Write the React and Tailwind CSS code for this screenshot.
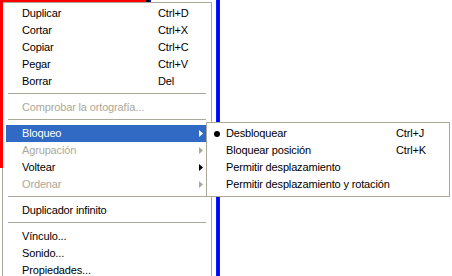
import React from "react";

const font = { fontFamily: '"Liberation Sans", Arial, sans-serif' };

function Arrow({ color }) {
  return (
    <svg width="4" height="7" viewBox="0 0 4 7" className="block">
      <polygon points="0,0 4,3.5 0,7" fill={color} />
    </svg>
  );
}

function Item({ label, shortcut, arrow, disabled, active }) {
  const text = active ? "text-white" : disabled ? "text-[#aca899]" : "text-black";
  const arrowColor = active ? "#ffffff" : disabled ? "#aca899" : "#000000";
  return (
    <div className={`flex h-[17px] items-center ${active ? "bg-[#316ac5]" : ""} ${text}`}>
      <span className="w-[152px] shrink-0 pl-[16px] whitespace-nowrap">{label}</span>
      <span className="whitespace-nowrap">{shortcut}</span>
      {arrow && (
        <span className="ml-auto mr-[5px]">
          <Arrow color={arrowColor} />
        </span>
      )}
    </div>
  );
}

function Sep() {
  return (
    <div className="h-[9px] px-[2px] pt-[3px]">
      <div className="h-px bg-[#aca899]" />
    </div>
  );
}

function SubItem({ label, shortcut, bullet }) {
  return (
    <div className="flex h-[17px] items-center text-black">
      <span className="flex w-[19px] shrink-0 items-center justify-center">
        {bullet && <span className="ml-[1px] block h-[6px] w-[6px] rounded-full bg-black" />}
      </span>
      <span className="w-[170px] shrink-0 whitespace-nowrap">{label}</span>
      <span className="whitespace-nowrap">{shortcut}</span>
    </div>
  );
}

export default function App() {
  return (
    <div
      className="relative h-[276px] w-[452px] overflow-hidden bg-white text-[11px] leading-none tracking-[-0.15px]"
      style={font}
    >
      {/* canvas shapes */}
      <div className="absolute left-0 top-0 h-[2px] w-[146px] bg-[#ff0000]" />
      <div className="absolute left-[146px] top-0 h-[2px] w-[3px] bg-black" />
      <div className="absolute left-[149px] top-0 h-[2px] w-[2px] bg-[#0000ff]" />
      <div className="absolute left-[216px] top-0 h-[276px] w-[4px] bg-[#0022ff]" />
      <div className="absolute left-[217px] top-0 h-[276px] w-[2px] bg-[#0000ee]" />

      {/* main context menu */}
      <div className="absolute left-[2px] top-[2px] w-[210px] border border-[#aca899] bg-white px-[3px] pt-[2px] pb-[2px]">
        <Item label="Duplicar" shortcut="Ctrl+D" />
        <Item label="Cortar" shortcut="Ctrl+X" />
        <Item label="Copiar" shortcut="Ctrl+C" />
        <Item label="Pegar" shortcut="Ctrl+V" />
        <Item label="Borrar" shortcut="Del" />
        <Sep />
        <Item label="Comprobar la ortografía..." disabled />
        <Sep />
        <Item label="Bloqueo" arrow active />
        <Item label="Agrupación" arrow disabled />
        <Item label="Voltear" arrow />
        <Item label="Ordenar" arrow disabled />
        <Sep />
        <Item label="Duplicador infinito" />
        <Sep />
        <Item label="Vínculo..." />
        <Item label="Sonido..." />
        <Item label="Propiedades..." />
      </div>

      {/* red selection edge drawn over */}
      <div className="absolute left-0 top-0 h-[168px] w-[3px] bg-[#ff0000]" />

      {/* submenu */}
      <div className="absolute left-[206px] top-[122px] w-[244px] border border-[#aca899] bg-white pt-[2px] pb-[3px]">
        <SubItem label="Desbloquear" shortcut="Ctrl+J" bullet />
        <SubItem label="Bloquear posición" shortcut="Ctrl+K" />
        <SubItem label="Permitir desplazamiento" />
        <SubItem label="Permitir desplazamiento y rotación" />
      </div>
    </div>
  );
}
